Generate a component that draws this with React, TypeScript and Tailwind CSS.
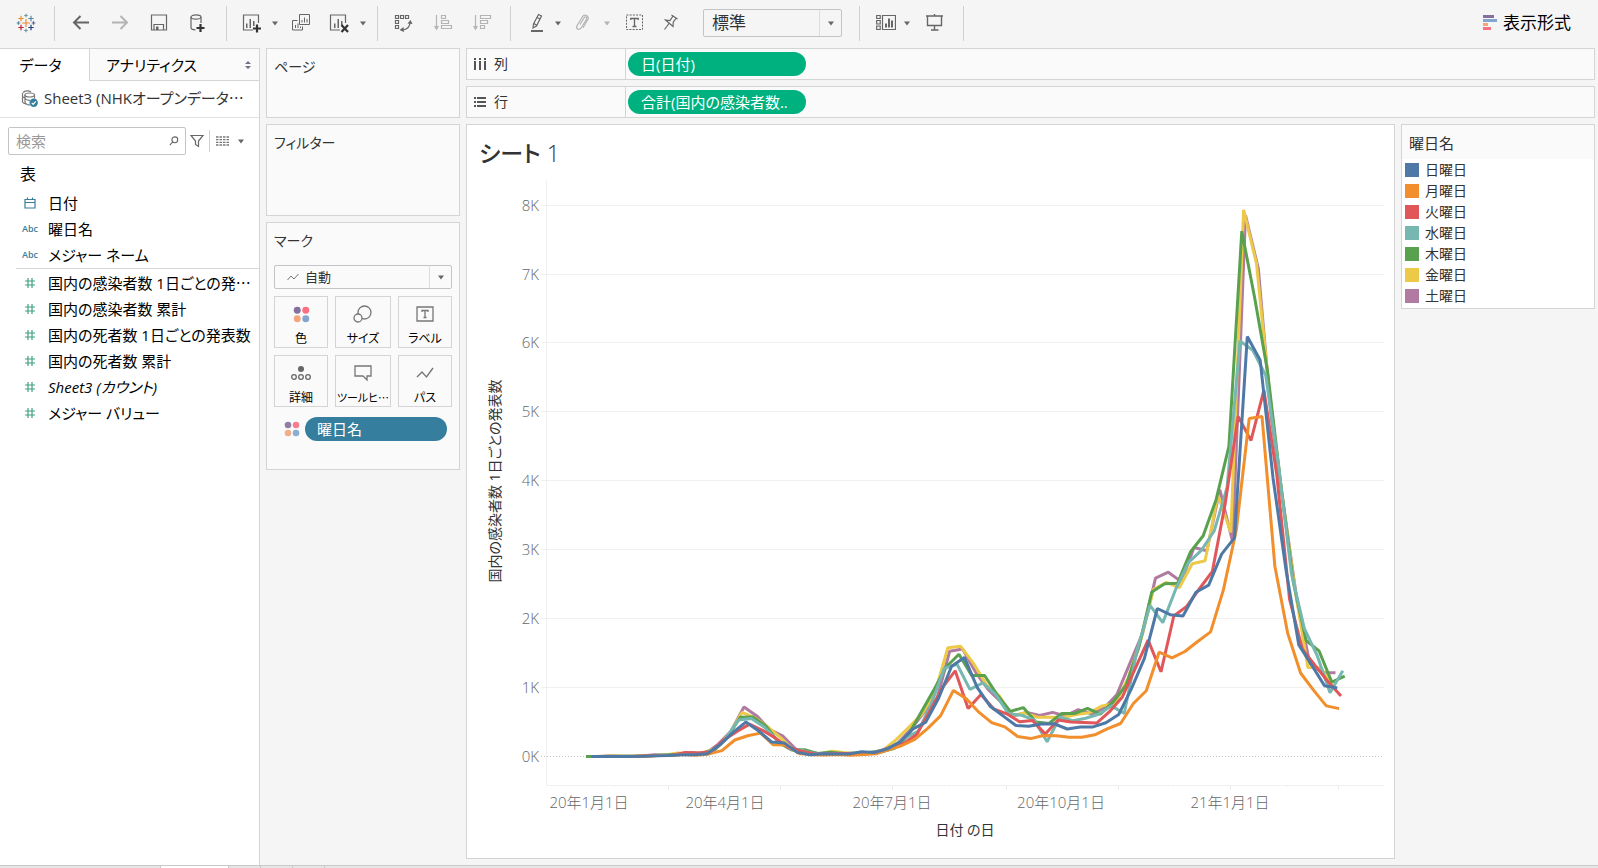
import React from 'react';
import clsx from 'clsx';

const SERIES = [
    {
        name: '日曜日', color: '#4e79a7', offset: 3,
        values: [0, 0, 2, 0, 3, 12, 14, 25, 25, 40, 170, 350, 500, 370, 210, 195, 60, 25, 40, 35, 35, 70, 58, 110, 210, 400, 500, 850, 1310, 1440, 1000, 730, 590, 450, 440, 470, 475, 400, 430, 430, 490, 610, 990, 1425, 2150, 2060, 2040, 2385, 2490, 2940, 3175, 6100, 5755, 4050, 2720, 1620, 1330, 1027, 995],
    },
    {
        name: '月曜日', color: '#f28e2b', offset: 4,
        values: [0, 2, 0, 0, 6, 14, 15, 28, 18, 38, 85, 240, 300, 340, 170, 165, 45, 25, 20, 28, 18, 30, 40, 100, 160, 250, 410, 590, 960, 840, 640, 490, 430, 290, 260, 305, 300, 280, 280, 315, 405, 480, 770, 955, 1515, 1432, 1525, 1670, 1810, 2420, 3290, 4908, 4940, 2760, 1790, 1213, 965, 735, 695],
    },
    {
        name: '火曜日', color: '#e15759', offset: 5,
        values: [0, 3, 2, 0, 12, 15, 18, 60, 50, 70, 240, 360, 470, 380, 270, 130, 80, 40, 35, 45, 45, 38, 65, 130, 190, 320, 650, 1000, 1245, 695, 900, 690, 620, 505, 525, 325, 530, 500, 495, 485, 650, 865, 1280, 1690, 1230, 2040, 2180, 2440, 2690, 3680, 4940, 4590, 5320, 4100, 2280, 1560, 1320, 1085, 880],
    },
    {
        name: '水曜日', color: '#76b7b2', offset: 6,
        values: [0, 5, 2, 4, 10, 15, 22, 45, 42, 90, 260, 530, 550, 430, 240, 110, 85, 40, 40, 40, 50, 50, 80, 150, 270, 370, 770, 1280, 1340, 975, 1070, 900, 620, 600, 530, 215, 570, 520, 555, 615, 735, 625, 1545, 2195, 1945, 2430, 2820, 2995, 3280, 3910, 6035, 5900, 5535, 4230, 2660, 1860, 1470, 925, 1245],
    },
    {
        name: '木曜日', color: '#59a14f', offset: 0,
        values: [0, 0, 2, 5, 6, 10, 20, 30, 35, 45, 95, 280, 570, 572, 440, 200, 96, 97, 45, 63, 45, 45, 60, 70, 120, 290, 620, 950, 1300, 1485, 1175, 1176, 890, 655, 710, 500, 480, 625, 625, 700, 615, 795, 1035, 1590, 2390, 2510, 2515, 2970, 3205, 3730, 4505, 7630, 6660, 5600, 4000, 2540, 1685, 1535, 1080, 1167],
    },
    {
        name: '金曜日', color: '#edc948', offset: 1,
        values: [0, 0, 12, 3, 8, 12, 20, 52, 35, 60, 120, 330, 640, 560, 430, 270, 90, 70, 40, 75, 55, 50, 60, 100, 250, 430, 620, 930, 1580, 1600, 1350, 1040, 880, 595, 635, 570, 570, 570, 610, 635, 735, 770, 1130, 1690, 2430, 2530, 2455, 2800, 2842, 3800, 3255, 7940, 7160, 5300, 3780, 2420, 1292, 1288, 1000],
    },
    {
        name: '土曜日', color: '#b07aa1', offset: 2,
        values: [0, 0, 5, 3, 8, 24, 18, 35, 60, 40, 180, 370, 720, 590, 390, 300, 110, 60, 40, 55, 45, 50, 60, 100, 200, 400, 640, 830, 1530, 1560, 1230, 970, 790, 590, 640, 595, 640, 590, 680, 620, 700, 900, 1350, 1790, 2590, 2677, 2540, 3036, 2988, 3875, 3120, 7860, 7090, 4930, 3590, 2270, 1350, 1220, 1215],
    },
];

const DIMENSIONS = [
    { label: '日付', type: 'date' },
    { label: '曜日名', type: 'text' },
    { label: 'メジャー ネーム', type: 'text' },
];

const MEASURES = [
    { label: '国内の感染者数 1日ごとの発', clipped: true },
    { label: '国内の感染者数 累計' },
    { label: '国内の死者数 1日ごとの発表数' },
    { label: '国内の死者数 累計' },
    { label: 'Sheet3 (カウント)', italic: true },
    { label: 'メジャー バリュー' },
];

// days are counted from 2020-01-16
const FIRST_DAY_X = 119;
const DAY_WIDTH = 1.837;
const BASELINE = 581.5;
const PER_THOUSAND = 68.85;

const xOf = (day: number) => FIRST_DAY_X + day * DAY_WIDTH;
const yOf = (value: number) => BASELINE - (value / 1000) * PER_THOUSAND;

const MAJOR_TICKS = [45, 106, 167, 229, 290, 351, 410];
const MINOR_TICKS = [16, 76, 137, 198, 259, 320, 382];

const X_LABELS = [
    { text: '20年1月1日', x: 122 },
    { text: '20年4月1日', x: 258 },
    { text: '20年7月1日', x: 425 },
    { text: '20年10月1日', x: 594 },
    { text: '21年1月1日', x: 763 },
];

const Caret = ({ className }: { className?: string }) => (
    <svg viewBox="0 0 8 5" className={clsx('w-2 h-[5px] shrink-0', className)} fill="#666">
        <path d="M1 0.5h6L4 4.5z" />
    </svg>
);

// the Japanese face centres its ellipsis on the line
const Ellipsis = () => <span className="font-['Noto_Sans_CJK_JP',sans-serif] leading-none">…</span>;

const Icon = ({ children }: { children: React.ReactNode }) => (
    <svg viewBox="0 0 20 20" className="w-5 h-5" fill="none" stroke="#666" strokeWidth="1.2">
        {children}
    </svg>
);

interface ToolProps {
    label: string;
    className?: string;
    disabled?: boolean;
    children: React.ReactNode;
}

const Tool = ({ label, className, disabled, children }: ToolProps) => (
    <button type="button" aria-label={label} disabled={disabled} className={clsx('shrink-0 disabled:opacity-45', className)}>
        {children}
    </button>
);

const Divider = ({ className }: { className?: string }) => (
    <div className={clsx('w-px h-[35px] bg-[#d0d0d0] shrink-0', className)} />
);

const ColorDots = ({ className }: { className?: string }) => (
    <svg viewBox="0 0 18 18" className={className}>
        <circle cx="4.5" cy="4.5" r="3.7" fill="#86709b" />
        <circle cx="13.5" cy="4.5" r="3.7" fill="#fa7083" />
        <circle cx="4.5" cy="13.5" r="3.7" fill="#f3a67c" />
        <circle cx="13.5" cy="13.5" r="3.7" fill="#82a6cf" />
    </svg>
);

const Bars = () => (
    <g fill="#666" stroke="none">
        <rect x="5" y="10.5" width="1.5" height="4.5" />
        <rect x="8.5" y="6" width="1.5" height="9" />
        <rect x="12" y="8" width="1.5" height="5" />
    </g>
);

const Logo = () => {
    const crosses = [
        { x: 10, y: 10, r: 4, c: '#eb8c3c' },
        { x: 5, y: 5.5, r: 2.7, c: '#eb9129' },
        { x: 15, y: 5.5, r: 2.7, c: '#5b879b' },
        { x: 5, y: 14.5, r: 2.7, c: '#c72035' },
        { x: 15, y: 14.5, r: 2.7, c: '#1f447e' },
        { x: 10, y: 2.5, r: 1.8, c: '#7199a6' },
        { x: 10, y: 17.5, r: 1.8, c: '#7199a6' },
        { x: 2.5, y: 10, r: 1.8, c: '#5b879b' },
        { x: 17.5, y: 10, r: 1.8, c: '#5b6591' },
    ];
    return (
        <svg viewBox="0 0 20 20" className="w-5 h-5" fill="none" strokeWidth="1.2">
            {crosses.map((k, i) => (
                <path key={i} d={`M${k.x - k.r} ${k.y}h${k.r * 2}M${k.x} ${k.y - k.r}v${k.r * 2}`} stroke={k.c} />
            ))}
        </svg>
    );
};

const Toolbar = () => (
    <header className="flex items-center h-12 pb-[2px] pr-[27px]">
        <Tool label="Tableau" className="ml-4"><Logo /></Tool>
        <Divider className="ml-[18px]" />

        <Tool label="元に戻す" className="ml-4">
            <Icon><path d="M18 9.5H3M9.5 3L3 9.5 9.5 16" strokeWidth="2" /></Icon>
        </Tool>
        <Tool label="やり直し" className="ml-[19px]" disabled>
            <Icon><path d="M2 9.5h15M10.5 3L17 9.5 10.5 16" strokeWidth="2" /></Icon>
        </Tool>
        <Tool label="保存" className="ml-[19px]">
            <Icon>
                <path d="M2.5 2h15v15h-15zM5 17v-5.5h9.5V17" />
                <path d="M7 13.5h2.5V17H7z" fill="#666" stroke="none" />
            </Icon>
        </Tool>
        <Tool label="データソースの追加" className="ml-[19px]">
            <Icon>
                <ellipse cx="8" cy="4" rx="5" ry="2.2" />
                <path d="M3 4v10.5c0 1.3 2 2.3 4.5 2.3M13 4v6" />
                <path d="M12.5 11v8M8.5 15h8" stroke="#333" strokeWidth="2.2" />
            </Icon>
        </Tool>
        <Divider className="ml-[18px]" />

        <Tool label="新しいワークシート" className="ml-[14px]">
            <Icon>
                <path d="M17.5 10V2h-15v15H12" />
                <Bars />
                <path d="M16 11.5v8M12 15.5h8" stroke="#333" strokeWidth="2.2" />
            </Icon>
        </Tool>
        <Tool label="新規メニュー" className="ml-[10px]"><Caret /></Tool>
        <Tool label="複製" className="ml-3">
            <Icon>
                <path d="M8.5 1.5h10v10h-10zM6.500 7.5h-5v9.5h10v-3.5" strokeWidth="1" />
                <path d="M11 7v2.5M13.5 4.5v5M16 6v3.5M4.5 12v3M7 10.5V15M9.5 13.5V15" strokeWidth="1" />
            </Icon>
        </Tool>
        <Tool label="シートのクリア" className="ml-[18px]">
            <Icon>
                <path d="M16.5 10V2h-15v15H11" />
                <Bars />
                <path d="M12.5 12l6.5 7M19 12l-6.5 7" stroke="#333" strokeWidth="2.2" />
            </Icon>
        </Tool>
        <Tool label="クリアメニュー" className="ml-[10px]"><Caret /></Tool>
        <Divider className="ml-[10px]" />

        <Tool label="行と列の交換" className="ml-[15px]">
            <Icon>
                <path d="M2.5 2.5h3v3h-3zM7.5 2.5h3v3h-3zM12.5 2.5h3v3h-3zM2.5 7.5h3v3h-3zM2.5 12.5h3v3h-3z" />
                <path d="M17 9.5c0 4-2.5 6.5-7 7.5" />
                <path d="M14.5 10.5L17.5 7l2 4zM10.5 14l-4 3 4.5 2z" fill="#666" stroke="none" />
            </Icon>
        </Tool>
        <Tool label="昇順で並べ替え" className="ml-5" disabled>
            <Icon>
                <path d="M3.5 2v14M8.5 2.5h4v3h-4zM8.5 7.5h7v3h-7zM8.5 12.5h10v3h-10z" />
                <path d="M1 13h5l-2.5 4.5z" fill="#666" stroke="none" />
            </Icon>
        </Tool>
        <Tool label="降順で並べ替え" className="ml-[19px]" disabled>
            <Icon>
                <path d="M3.5 2v14M8.5 2.5h10v3h-10zM8.5 7.5h7v3h-7zM8.5 12.5h4v3h-4z" />
                <path d="M1 13h5l-2.5 4.5z" fill="#666" stroke="none" />
            </Icon>
        </Tool>
        <Divider className="ml-[18px]" />

        <Tool label="ハイライト" className="ml-4">
            <Icon>
                <path d="M11.5 1.5l3 1.5-5 10-3.5 2 .5-4zM7 10.5l3 2M10 4.5l3 1.5" />
                <path d="M4 18h12" strokeWidth="2" />
            </Icon>
        </Tool>
        <Tool label="ハイライトメニュー" className="ml-[7px]"><Caret /></Tool>
        <Tool label="グループ" className="ml-[11px]" disabled>
            <Icon>
                <path d="M7 11.5l4-6.5c1.5-2 3.5-.8 2.5 1.2l-5.5 9c-2 2.5-5.5.5-4-2.5l5.5-9c2-3 7-1 5.5 2.5l-5 8.5" />
            </Icon>
        </Tool>
        <Tool label="グループメニュー" className="ml-[10px]" disabled><Caret /></Tool>
        <Tool label="マークラベル" className="ml-[14px]">
            <Icon>
                <path d="M1.5 2h16v14.5h-16z" strokeDasharray="2 1.2" strokeWidth="1" />
                <path d="M5.8 7V5.5h7.4V7M9.5 5.5v8M7.5 13.5h4" strokeWidth="1.3" />
            </Icon>
        </Tool>
        <Tool label="固定" className="ml-4">
            <Icon>
                <path d="M10.5 2l6 4M12 3L9 7.5 4.5 7l7.5 6.5.3-4.5 3-3.8M8 10.5L3.5 16.5" />
            </Icon>
        </Tool>
        <div className="relative w-[139px] h-7 ml-[22px] shrink-0">
            <select aria-label="適合" className="appearance-none w-full h-full pl-2 border border-[#c4c4c4] rounded-[2px] text-[17px] leading-6 text-[#333] bg-[#f5f5f5]">
                <option>標準</option>
            </select>
            <div className="absolute top-px bottom-px right-0 w-[23px] border-l border-[#dcdcdc] flex items-center justify-center pointer-events-none">
                <Caret />
            </div>
        </div>
        <Divider className="ml-[17px]" />

        <Tool label="カードの表示/非表示" className="ml-4">
            <Icon>
                <path d="M.7 2.5h3.5v3H.7zM.7 7.5h3.5v3.5H.7zM.7 13h3.5v3.5H.7zM6.5 2.5h13v14h-13z" />
                <g fill="#666" stroke="none">
                    <rect x="9" y="10.5" width="2" height="4" />
                    <rect x="12" y="5.5" width="2" height="9" />
                    <rect x="15" y="7.5" width="2" height="7" />
                </g>
            </Icon>
        </Tool>
        <Tool label="カードメニュー" className="ml-[7px]"><Caret /></Tool>
        <Tool label="プレゼンテーション モード" className="ml-[14px]">
            <Icon>
                <path d="M1 3h17M2.5 3v9.5h14V3M9.5 12.5V17M6 17h7.5M9.5 1v2" strokeWidth="1.4" />
            </Icon>
        </Tool>
        <Divider className="ml-[18px]" />

        <button type="button" className="ml-auto flex items-center gap-[6px] text-[17px] leading-6 text-black whitespace-nowrap">
            <svg viewBox="0 0 14 16" className="w-[14px] h-4">
                <rect y="0" width="11" height="3" fill="#86709b" />
                <rect y="4" width="14" height="3" fill="#82a6cf" />
                <rect y="8" width="5" height="3" fill="#f3a67c" />
                <rect y="12" width="8" height="3" fill="#fa7083" />
            </svg>
            表示形式
        </button>
    </header>
);

const FieldIcon = ({ type }: { type: string }) => {
    if (type === 'date') {
        return (
            <svg viewBox="0 0 12 12" className="w-3 h-3" fill="none" stroke="#3a7d9a" strokeWidth="1.2">
                <path d="M1 2.5h10v8.5H1zM1 5.5h10M3.5.5v2.5M8.5.5v2.5" />
            </svg>
        );
    }
    if (type === 'text') {
        return <span className="text-[9px] leading-3 font-semibold text-[#3a7d9a]">Abc</span>;
    }
    return (
        <svg viewBox="0 0 12 12" className="w-3 h-3" fill="none" stroke="#3fa27e" strokeWidth="1.2">
            <path d="M4 1v10M8 1v10M1 4h10M1 8h10" />
        </svg>
    );
};

interface FieldProps {
    label: string;
    type: string;
    italic?: boolean;
    clipped?: boolean;
}

const Field = ({ label, type, italic, clipped }: FieldProps) => (
    <li className="flex items-center h-[26px]">
        <span className="w-[28px] flex justify-center mr-1">
            <FieldIcon type={type} />
        </span>
        <span className={clsx('whitespace-nowrap', italic && 'italic')}>
            {label}{clipped && <Ellipsis />}
        </span>
    </li>
);

const DataPane = () => (
    <aside className="w-[260px] shrink-0 bg-white border-t border-r border-[#d4d4d4] text-[15px] leading-5 text-black">
        <div className="flex h-8">
            <button type="button" className="w-[89px] pr-2">データ</button>
            <button type="button" className="flex-1 flex items-center justify-between pl-4 pr-2 border-l border-b border-[#d4d4d4] bg-[#fafafa]">
                アナリティクス
                <svg viewBox="0 0 6 8" className="w-[6px] h-2" fill="#6b7280">
                    <path d="M0 3h6L3 0zM0 5h6L3 8z" />
                </svg>
            </button>
        </div>
        <div className="flex items-center gap-[6px] h-[37px] pl-[21px] pb-[2px] border-b border-[#e2e2e2] text-[#333]">
            <svg viewBox="0 0 17 17" className="w-[17px] h-[17px] shrink-0" fill="none" stroke="#777" strokeWidth="1.2">
                <path d="M2 2.5C4 .3 8 .3 10 2M1.5 3v9c.5 1 1.5 1.5 3 2M4 5v7.5c1 2 3 2.5 5 2.5M13.5 5v3.5M1.5 6.5c.5 1 1.5 1.2 2.5 1.5M4 8.5c1 1.5 3 1.8 5 1.8" />
                <ellipse cx="8.7" cy="5" rx="4.8" ry="2" />
                <circle cx="12.7" cy="12.7" r="4.2" fill="#357e9d" stroke="none" />
                <path d="M10.7 12.8l1.5 1.5 2.6-3" stroke="#fff" />
            </svg>
            <span className="whitespace-nowrap">Sheet3 (NHKオープンデータ<Ellipsis /></span>
        </div>
        <div className="flex items-center h-7 mt-[9px] pl-2">
            <div className="flex items-center w-[178px] h-7 pl-[7px] pr-[6px] border border-[#c4c4c4] rounded-[2px]">
                <input type="text" aria-label="検索" placeholder="検索" className="w-full min-w-0 outline-none placeholder:text-[#999]" />
                <svg viewBox="0 0 12 12" className="w-[10px] h-[10px] shrink-0" fill="none" stroke="#666" strokeWidth="1.3">
                    <circle cx="7" cy="4.5" r="3.5" />
                    <path d="M4.5 7L1 11" />
                </svg>
            </div>
            <button type="button" aria-label="フィルター" className="ml-1">
                <svg viewBox="0 0 14 14" className="w-[14px] h-[14px]" fill="none" stroke="#666" strokeWidth="1.2">
                    <path d="M1 1.5h12L8.5 7v5.5l-3-2V7z" />
                </svg>
            </button>
            <div className="w-px h-[22px] ml-[5px] bg-[#d0d0d0]" />
            <button type="button" aria-label="表示" className="ml-[6px] flex items-center gap-2">
                <svg viewBox="0 0 13 10" className="w-[13px] h-[10px]" stroke="#777" strokeWidth="1.3">
                    <path d="M0 1h13M0 3.7h13M0 6.3h13M0 9h13" strokeDasharray="2.5 1" />
                </svg>
                <Caret />
            </button>
        </div>
        <h2 className="mt-[7px] pl-5 text-[16px] leading-6">表</h2>
        <ul className="mt-1 ml-4">
            {DIMENSIONS.map((f) => <Field key={f.label} label={f.label} type={f.type} />)}
        </ul>
        <ul className="ml-4 pt-px border-t border-[#d8d8d8]">
            {MEASURES.map((f) => <Field key={f.label} type="number" {...f} />)}
        </ul>
    </aside>
);

const MarkButton = ({ label, clipped, children }: { label: string; clipped?: boolean; children: React.ReactNode }) => (
    <button type="button" className="h-[52px] pt-1 flex flex-col items-center border border-[#d4d4d4] bg-[#fafafa] text-[12px] leading-4 text-black whitespace-nowrap">
        <span className="h-[26px] mb-1 flex items-center">{children}</span>
        <span className={clsx(clipped && 'text-[11px]')}>{label}{clipped && <Ellipsis />}</span>
    </button>
);

const Cards = () => (
    <div className="w-[194px] shrink-0 flex flex-col gap-[6px] text-[14px] leading-5 text-[#333]">
        <section className="h-[70px] px-[7px] py-2 border border-[#d4d4d4] bg-[#fafafa]">
            <h3>ページ</h3>
        </section>
        <section className="h-[92px] px-[7px] py-2 border border-[#d4d4d4] bg-[#fafafa]">
            <h3>フィルター</h3>
        </section>
        <section className="h-[248px] px-[7px] py-2 border border-[#d4d4d4] bg-[#fafafa]">
            <h3>マーク</h3>
            <div className="relative h-6 mt-[14px]">
                <select aria-label="マークタイプ" className="appearance-none w-full h-full pl-[30px] border border-[#c4c4c4] rounded-[2px] text-[13px] leading-5">
                    <option>自動</option>
                </select>
                <svg viewBox="0 0 12 8" className="absolute left-[13px] top-2 w-3 h-2 pointer-events-none" fill="none" stroke="#777" strokeWidth="1">
                    <path d="M.5 7L4 3l3 3 4.5-5" />
                </svg>
                <div className="absolute top-px bottom-px right-0 w-[23px] border-l border-[#dcdcdc] flex items-center justify-center pointer-events-none">
                    <Caret />
                </div>
            </div>
            <div className="grid grid-cols-[54px_minmax(0,1fr)_54px] gap-[7px] mt-[7px]">
                <MarkButton label="色"><ColorDots className="w-[17px] h-[17px]" /></MarkButton>
                <MarkButton label="サイズ">
                    <svg viewBox="0 0 20 18" className="w-5 h-[18px]" fill="none" stroke="#777" strokeWidth="1.3">
                        <circle cx="11.5" cy="7.5" r="6.5" />
                        <circle cx="5" cy="13" r="4" fill="#fafafa" />
                    </svg>
                </MarkButton>
                <MarkButton label="ラベル">
                    <svg viewBox="0 0 18 16" className="w-[18px] h-4" fill="none" stroke="#777" strokeWidth="1.3">
                        <path d="M1 1h16v14H1zM6 6V4.5h6V6M9 4.5v7M7.5 11.5h3" />
                    </svg>
                </MarkButton>
                <MarkButton label="詳細">
                    <svg viewBox="0 0 20 16" className="w-5 h-4" fill="none" stroke="#666" strokeWidth="1.3">
                        <circle cx="10" cy="4" r="3" fill="#666" stroke="none" />
                        <circle cx="3" cy="12" r="2.3" />
                        <circle cx="10" cy="12" r="2.3" />
                        <circle cx="17" cy="12" r="2.3" />
                    </svg>
                </MarkButton>
                <MarkButton label="ツールヒ" clipped>
                    <svg viewBox="0 0 18 18" className="w-[18px] h-[18px]" fill="none" stroke="#777" strokeWidth="1.3">
                        <path d="M1 2h16v10h-4v4l-4-4H1z" />
                    </svg>
                </MarkButton>
                <MarkButton label="パス">
                    <svg viewBox="0 0 18 12" className="w-[18px] h-3" fill="none" stroke="#777" strokeWidth="1.4">
                        <path d="M1 10l5-5 4.5 5L17 1" />
                    </svg>
                </MarkButton>
            </div>
            <div className="flex items-center gap-[5px] mt-[10px] pl-[10px] pr-[5px]">
                <ColorDots className="w-4 h-4 opacity-90 shrink-0" />
                <button type="button" className="flex-1 h-6 pl-3 rounded-full bg-[#357e9d] text-white text-[15px] leading-6 text-left">曜日名</button>
            </div>
        </section>
    </div>
);

const Shelf = ({ label, field, children }: { label: string; field: string; children: React.ReactNode }) => (
    <div className="flex h-8 border border-[#d4d4d4] bg-[#fafafa]">
        <div className="w-[159px] flex items-center gap-2 pl-[7px] border-r border-[#d4d4d4] text-[14px] leading-5 text-[#333]">
            <svg viewBox="0 0 12 12" className="w-3 h-3" fill="#555">{children}</svg>
            {label}
        </div>
        <button type="button" className="w-[178px] h-6 my-[3px] ml-[2px] pl-[13px] rounded-full bg-[#00b180] text-white text-[15px] leading-6 text-left whitespace-nowrap overflow-hidden">
            {field}
        </button>
    </div>
);

const Chart = () => (
    <svg viewBox="0 0 927 682" className="block w-full" fontSize="14">
        {[1, 2, 3, 4, 5, 6, 7, 8].map((k) => (
            <path key={k} d={`M74 ${Math.round(yOf(k * 1000)) - 0.5}H917`} stroke="#f0f0f0" />
        ))}
        <path d="M79.5 5V610.5H917" stroke="#f0f0f0" fill="none" />
        <path d="M74 581.5H917" stroke="#c4c4c4" strokeDasharray="1 2" />
        {MAJOR_TICKS.map((d) => <path key={d} d={`M${Math.round(xOf(d)) - 0.5} 611v4`} stroke="#ededed" />)}
        {MINOR_TICKS.map((d) => <path key={d} d={`M${Math.round(xOf(d)) - 0.5} 611v1`} stroke="#ededed" />)}

        <g fill="#666" textAnchor="end" fontWeight="300" fontSize="15">
            {[0, 1, 2, 3, 4, 5, 6, 7, 8].map((k) => (
                <text key={k} x="72" y={Math.round(yOf(k * 1000)) + 5}>{k}K</text>
            ))}
        </g>
        <g fill="#666" textAnchor="middle" fontWeight="300" fontSize="15">
            {X_LABELS.map((l) => <text key={l.text} x={l.x} y="633">{l.text}</text>)}
        </g>
        <text x="498" y="660" fill="#333" textAnchor="middle">日付 の日</text>
        <text transform="translate(33 306) rotate(-90)" fill="#333" textAnchor="middle">国内の感染者数 1日ごとの発表数</text>

        <g fill="none" strokeWidth="3" strokeLinejoin="bevel">
            {[...SERIES].reverse().map((s) => (
                <polyline
                    key={s.name}
                    stroke={s.color}
                    points={s.values.map((v, week) => `${xOf(week * 7 + s.offset).toFixed(1)},${yOf(v).toFixed(1)}`).join(' ')}
                />
            ))}
        </g>
    </svg>
);

const Legend = () => (
    <aside className="w-[194px] shrink-0 self-start border border-[#d4d4d4] bg-white text-[#333]">
        <h3 className="h-[34px] pl-[7px] pt-2 bg-[#fafafa] text-[15px] leading-5">曜日名</h3>
        <ul className="pb-[2px] text-[14px] leading-5">
            {SERIES.map((s) => (
                <li key={s.name} className="flex items-center gap-[6px] h-[21px] pl-[3px]">
                    <span className="w-[14px] h-[14px]" style={{ backgroundColor: s.color }}></span>
                    {s.name}
                </li>
            ))}
        </ul>
    </aside>
);

const App: React.FC = () => {
    return (
        <div className="min-h-screen flex flex-col bg-[#f5f5f5] font-['Open_Sans','Noto_Sans_CJK_JP',sans-serif] [font-feature-settings:'palt']">
            <Toolbar />
            <div className="flex-1 flex gap-[6px] pr-[3px]">
                <DataPane />
                <Cards />
                <main className="flex-1 min-w-0 flex flex-col gap-[6px] pb-[6px]">
                    <Shelf label="列" field="日(日付)">
                        <path d="M0 0h2v2H0zM0 3h2v9H0zM5 0h2v2H5zM5 3h2v9H5zM10 0h2v2h-2zM10 3h2v9h-2z" />
                    </Shelf>
                    <Shelf label="行" field="合計(国内の感染者数..">
                        <path d="M0 1h2v2H0zM3 1h9v2H3zM0 5h2v2H0zM3 5h9v2H3zM0 9h2v2H0zM3 9h9v2H3z" />
                    </Shelf>
                    <div className="flex-1 flex gap-[6px]">
                        <section className="flex-1 min-w-0 border border-[#d4d4d4] bg-white">
                            <h1 className="h-[50px] pl-3 pt-3 text-[23px] leading-8 text-[#333]">
                                <span className="font-medium">シート</span> <span className="font-light">1</span>
                            </h1>
                            <Chart />
                        </section>
                        <Legend />
                    </div>
                </main>
            </div>
            <footer className="flex h-[3px] border-t border-[#c8c8c8] bg-[#e6e6e6]">
                <div className="w-[161px] border-r border-[#c8c8c8]"></div>
                <div className="w-[68px] border-r border-[#c8c8c8] bg-white"></div>
                <div className="w-8 border-r border-[#c8c8c8]"></div>
                <div className="w-8 border-r border-[#c8c8c8]"></div>
                <div className="w-8 border-r border-[#c8c8c8]"></div>
            </footer>
        </div>
    );
};

export default App;
